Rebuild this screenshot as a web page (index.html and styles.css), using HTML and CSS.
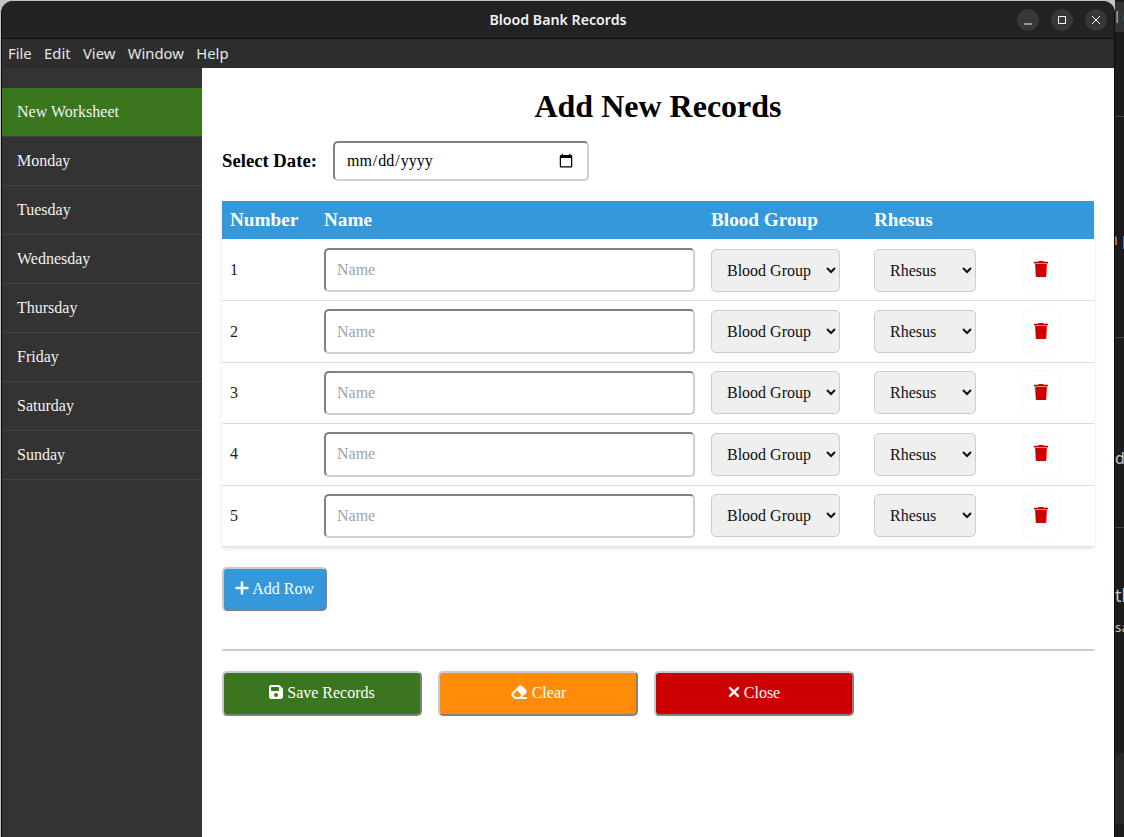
FILE: index.html
```html
<!DOCTYPE html>
<html lang="en">
<head>
    <meta charset="UTF-8">
    <meta name="viewport" content="width=device-width, initial-scale=1.0">
    <title>Blood Bank Records</title>
    <link rel="stylesheet" href="styles.css">
</head>
<body>
    <div class="window">
        <header class="titlebar">
            <span class="title">Blood Bank Records</span>
            <div class="controls">
                <button class="ctl" aria-label="Minimize"><svg viewBox="0 0 16 16"><path d="M4 12h8" /></svg></button>
                <button class="ctl" aria-label="Maximize"><svg viewBox="0 0 16 16"><rect x="4.5" y="4.5" width="7" height="7" /></svg></button>
                <button class="ctl" aria-label="Close window"><svg viewBox="0 0 16 16"><path d="M4 4l8 8M12 4l-8 8" /></svg></button>
            </div>
        </header>
        <nav class="menubar">
            <span>File</span>
            <span>Edit</span>
            <span>View</span>
            <span>Window</span>
            <span>Help</span>
        </nav>
        <div class="app">
            <aside class="sidebar">
                <a class="day active">New Worksheet</a>
                <a class="day">Monday</a>
                <a class="day">Tuesday</a>
                <a class="day">Wednesday</a>
                <a class="day">Thursday</a>
                <a class="day">Friday</a>
                <a class="day">Saturday</a>
                <a class="day">Sunday</a>
            </aside>
            <main class="content">
                <h1>Add New Records</h1>
                <div class="date-row">
                    <label for="date">Select Date:</label>
                    <input id="date" type="date">
                </div>
                <table class="records">
                    <thead>
                        <tr>
                            <th class="col-num">Number</th>
                            <th class="col-name">Name</th>
                            <th class="col-group">Blood Group</th>
                            <th class="col-rh">Rhesus</th>
                            <th></th>
                        </tr>
                    </thead>
                    <tbody id="rows"></tbody>
                </table>
                <button class="btn btn-add">
                    <svg class="ico ico-bold" viewBox="0 0 448 512"><path d="M256 80c0-17.700-14.300-32-32-32s-32 14.300-32 32V224H48c-17.700 0-32 14.300-32 32s14.300 32 32 32H192V432c0 17.700 14.300 32 32 32s32-14.300 32-32V288H400c17.700 0 32-14.300 32-32s-14.300-32-32-32H256V80z"/></svg>
                    Add Row
                </button>
                <hr class="divider">
                <div class="actions">
                    <button class="btn btn-wide btn-save">
                        <svg class="ico" viewBox="0 0 448 512"><path d="M64 32C28.700 32 0 60.700 0 96V416c0 35.300 28.700 64 64 64H384c35.300 0 64-28.700 64-64V173.300c0-17-6.700-33.300-18.700-45.300L352 50.700C340 38.700 323.700 32 306.700 32H64zm0 96c0-17.700 14.300-32 32-32H288c17.700 0 32 14.300 32 32v64c0 17.700-14.300 32-32 32H96c-17.700 0-32-14.300-32-32V128zM224 288a64 64 0 1 1 0 128 64 64 0 1 1 0-128z"/></svg>
                        Save Records
                    </button>
                    <button class="btn btn-wide btn-clear">
                        <svg class="ico" viewBox="0 0 576 512"><path d="M290.700 57.400L57.400 290.700c-25 25-25 65.500 0 90.500l80 80c12 12 28.300 18.700 45.300 18.700H288h9.400H512c17.700 0 32-14.300 32-32s-14.300-32-32-32H387.900L518.600 285.300c25-25 25-65.500 0-90.500L381.300 57.400c-25-25-65.500-25-90.600 0zM297.400 416H288l-105.400 0-80-80L227.300 211.300 364.700 348.700 297.400 416z"/></svg>
                        Clear
                    </button>
                    <button class="btn btn-wide btn-close">
                        <svg class="ico ico-bold" viewBox="0 0 384 512"><path d="M342.600 150.600c12.500-12.500 12.500-32.800 0-45.300s-32.800-12.500-45.300 0L192 210.700 86.600 105.400c-12.500-12.500-32.800-12.500-45.300 0s-12.500 32.800 0 45.300L146.700 256 41.400 361.400c-12.500 12.500-12.500 32.800 0 45.300s32.800 12.500 45.300 0L192 301.300 297.400 406.600c12.500 12.500 32.800 12.500 45.300 0s12.500-32.800 0-45.300L237.300 256 342.600 150.600z"/></svg>
                        Close
                    </button>
                </div>
            </main>
        </div>
    </div>
    <div class="behind">
        <div class="tabstrip"></div>
        <span class="frag frag-top"><span class="tan">l</span> <span class="blue">(</span></span>
        <span class="frag frag-a"><span class="tan">n</span> <span class="blue">p</span></span>
        <span class="frag frag-b">d</span>
        <span class="frag frag-c">th</span>
        <span class="frag frag-d">s a</span>
        <i class="rule rule-1"></i>
        <i class="rule rule-2"></i>
        <i class="rule rule-3"></i>
        <div class="bottomband"></div>
    </div>

    <script>
        // Five empty rows to start with
        const rows = document.getElementById('rows');
        for (let i = 1; i <= 5; i++) {
            rows.insertAdjacentHTML('beforeend', `
                <tr>
                    <td>${i}</td>
                    <td><input class="name" type="text" placeholder="Name"></td>
                    <td><select class="pick pick-group"><option>Blood Group</option></select></td>
                    <td><select class="pick pick-rh"><option>Rhesus</option></select></td>
                    <td><button class="del" aria-label="Delete row"><svg viewBox="0 0 448 512"><path d="M150 0H298L310 24H440a8 8 0 0 1 8 8V72a8 8 0 0 1-8 8H8a8 8 0 0 1-8-8V32a8 8 0 0 1 8-8H138zM36 96H412L392 480a32 32 0 0 1-32 32H88a32 32 0 0 1-32-32z"/></svg></button></td>
                </tr>`);
        }
    </script>
</body>
</html>
```

FILE: styles.css
```css
body {
    margin: 0;
    height: 837px;
    overflow: hidden;
    display: flex;
    background: #c4c4c4;
    font-family: "Liberation Serif", serif;
    font-size: 16px;
}

/* window frame */
.window {
    width: 1112px;
    margin-left: 1px;
    margin-top: 1px;
    display: flex;
    flex-direction: column;
    border-left: 1px solid #0c0c0c;
    border-right: 1px solid #0c0c0c;
    border-radius: 12px 12px 0 0;
    overflow: hidden;
    background: #2d2d2d;
    flex: none;
}
.titlebar {
    height: 37px;
    flex: none;
    position: relative;
    display: flex;
    align-items: center;
    justify-content: center;
    background: #222;
    border-bottom: 1px solid #0d0d0d;
}
.title {
    color: #f2f2f2;
    font-family: "Noto Sans", sans-serif;
    font-size: 14.2px;
    font-weight: 600;
}
.controls {
    position: absolute;
    right: 7px;
    top: 8px;
    display: flex;
    gap: 12px;
}
.ctl {
    width: 22px;
    height: 22px;
    padding: 3px;
    border: 0;
    border-radius: 50%;
    background: #373737;
}
.ctl svg {
    display: block;
    width: 16px;
    height: 16px;
    fill: none;
    stroke: #f4f4f4;
    stroke-width: 1;
}
.menubar {
    height: 28px;
    padding-bottom: 1px;
    flex: none;
    display: flex;
    align-items: center;
    gap: 12.4px;
    padding-left: 6px;
    background: #2d2d2d;
    color: #e6e6e6;
    font-family: "Noto Sans", sans-serif;
    font-size: 14.8px;
}

/* sidebar and content */
.app {
    flex: 1;
    display: flex;
}
.sidebar {
    width: 200px;
    flex: none;
    padding-top: 20px;
    background: #333;
}
.day {
    display: block;
    height: 48px;
    line-height: 47px;
    padding-left: 15px;
    color: #f1f1f1;
    border-bottom: 1px solid #444;
}
.day.active {
    background: #3a761d;
}
.content {
    flex: 1;
    padding: 20px;
    background: #fff;
}
h1 {
    margin: 0 0 16px;
    text-align: center;
    font-size: 32px;
    line-height: 37px;
}
.date-row {
    display: flex;
    align-items: center;
    gap: 16px;
    margin-bottom: 20px;
}
.date-row label {
    font-weight: bold;
    font-size: 18.7px;
}
#date {
    width: 256px;
    height: 40px;
    box-sizing: border-box;
    padding: 10px 11px;
    font-family: inherit;
    font-size: 16px;
    border: 2px solid;
    border-color: #808085 #ced0d5 #ced0d5 #808085;
    border-radius: 5px;
}

/* table */
.records {
    width: 100%;
    border-collapse: collapse;
    table-layout: fixed;
    box-shadow: 0 2px 4px rgba(0, 0, 0, 0.1);
}
.records thead {
    border-bottom: 1px solid #fff;
}
.records th {
    height: 38px;
    padding: 0 8px;
    text-align: left;
    font-size: 19.2px;
    color: #fff;
    background: #3498db;
}
.records td {
    padding: 8px;
    color: #1b1b1b;
    border-bottom: 1px solid #ddd;
}
.col-num { width: 78px; }
.col-name { width: 371px; }
.col-group { width: 147px; }
.col-rh { width: 133px; }
.name {
    display: block;
    width: 100%;
    height: 44.4px;
    box-sizing: border-box;
    padding: 10px 11px;
    font-family: inherit;
    font-size: 16px;
    border: 2px solid;
    border-color: #808085 #ced0d5 #ced0d5 #808085;
    border-radius: 5px;
}
.name::placeholder {
    color: #9ca3af;
}
.pick {
    display: block;
    height: 43px;
    padding: 0 11px;
    font-family: inherit;
    font-size: 16px;
    color: #111;
    background: #efefef;
    border: 1px solid #ccc;
    border-radius: 5px;
}
.pick-group { width: 129px; }
.pick-rh { width: 102px; }
.del {
    display: block;
    width: 36px;
    height: 42px;
    padding: 1px 0 0;
    border: 0;
    border-radius: 6px;
    background: #fff;
    box-shadow: 0 0 3px rgba(0, 0, 0, 0.06);
}
.del svg {
    width: 14px;
    height: 16px;
    fill: #cc0000;
}

/* buttons */
.btn {
    height: 44px;
    box-sizing: border-box;
    padding: 0;
    font-family: inherit;
    font-size: 16px;
    color: #fff;
    white-space: nowrap;
    border: 2px solid;
    border-color: #c8cad0 #808085 #808085 #c8cad0;
    border-radius: 5px;
}
.ico {
    height: 16px;
    fill: #fff;
    vertical-align: -2px;
}
.ico-bold {
    stroke: #fff;
    stroke-width: 16;
}
.btn-add {
    display: block;
    width: 105px;
    margin-top: 20px;
    background: #3498db;
}
.divider {
    margin: 38px 0 20px;
    border: 0;
    border-top: 2px solid #ccc;
}
.actions {
    display: flex;
    gap: 16px;
}
.btn-wide {
    width: 200px;
    height: 45px;
}
.btn-save { background: #3a761d; }
.btn-clear { background: #ff8c08; }
.btn-close { background: #cc0000; }

/* bits of the window behind */
.behind {
    flex: 1;
    position: relative;
    overflow: hidden;
    background: #1c1c1c;
    color: #c9c9c9;
    font-family: "Noto Sans", sans-serif;
    font-size: 16px;
}
.tabstrip {
    height: 30px;
    margin-top: 2px;
    background: #333;
}
.frag {
    position: absolute;
    left: 0;
    white-space: nowrap;
}
.tan { color: #ce9178; }
.blue { color: #4fa3e0; }
.frag-top { top: 6px; }
.frag-a { top: 228px; left: -7px; }
.frag-b { top: 447px; }
.frag-c { top: 583px; font-size: 18px; }
.frag-d { top: 618px; font-size: 13px; word-spacing: -3px; }
.rule {
    position: absolute;
    left: 0;
    right: 0;
    height: 1px;
    background: #444;
}
.rule-1 { top: 116px; }
.rule-2 { top: 337px; }
.rule-3 { top: 527px; }
.bottomband {
    position: absolute;
    left: 0;
    right: 0;
    top: 753px;
    height: 71px;
    background: #282828;
}
```
